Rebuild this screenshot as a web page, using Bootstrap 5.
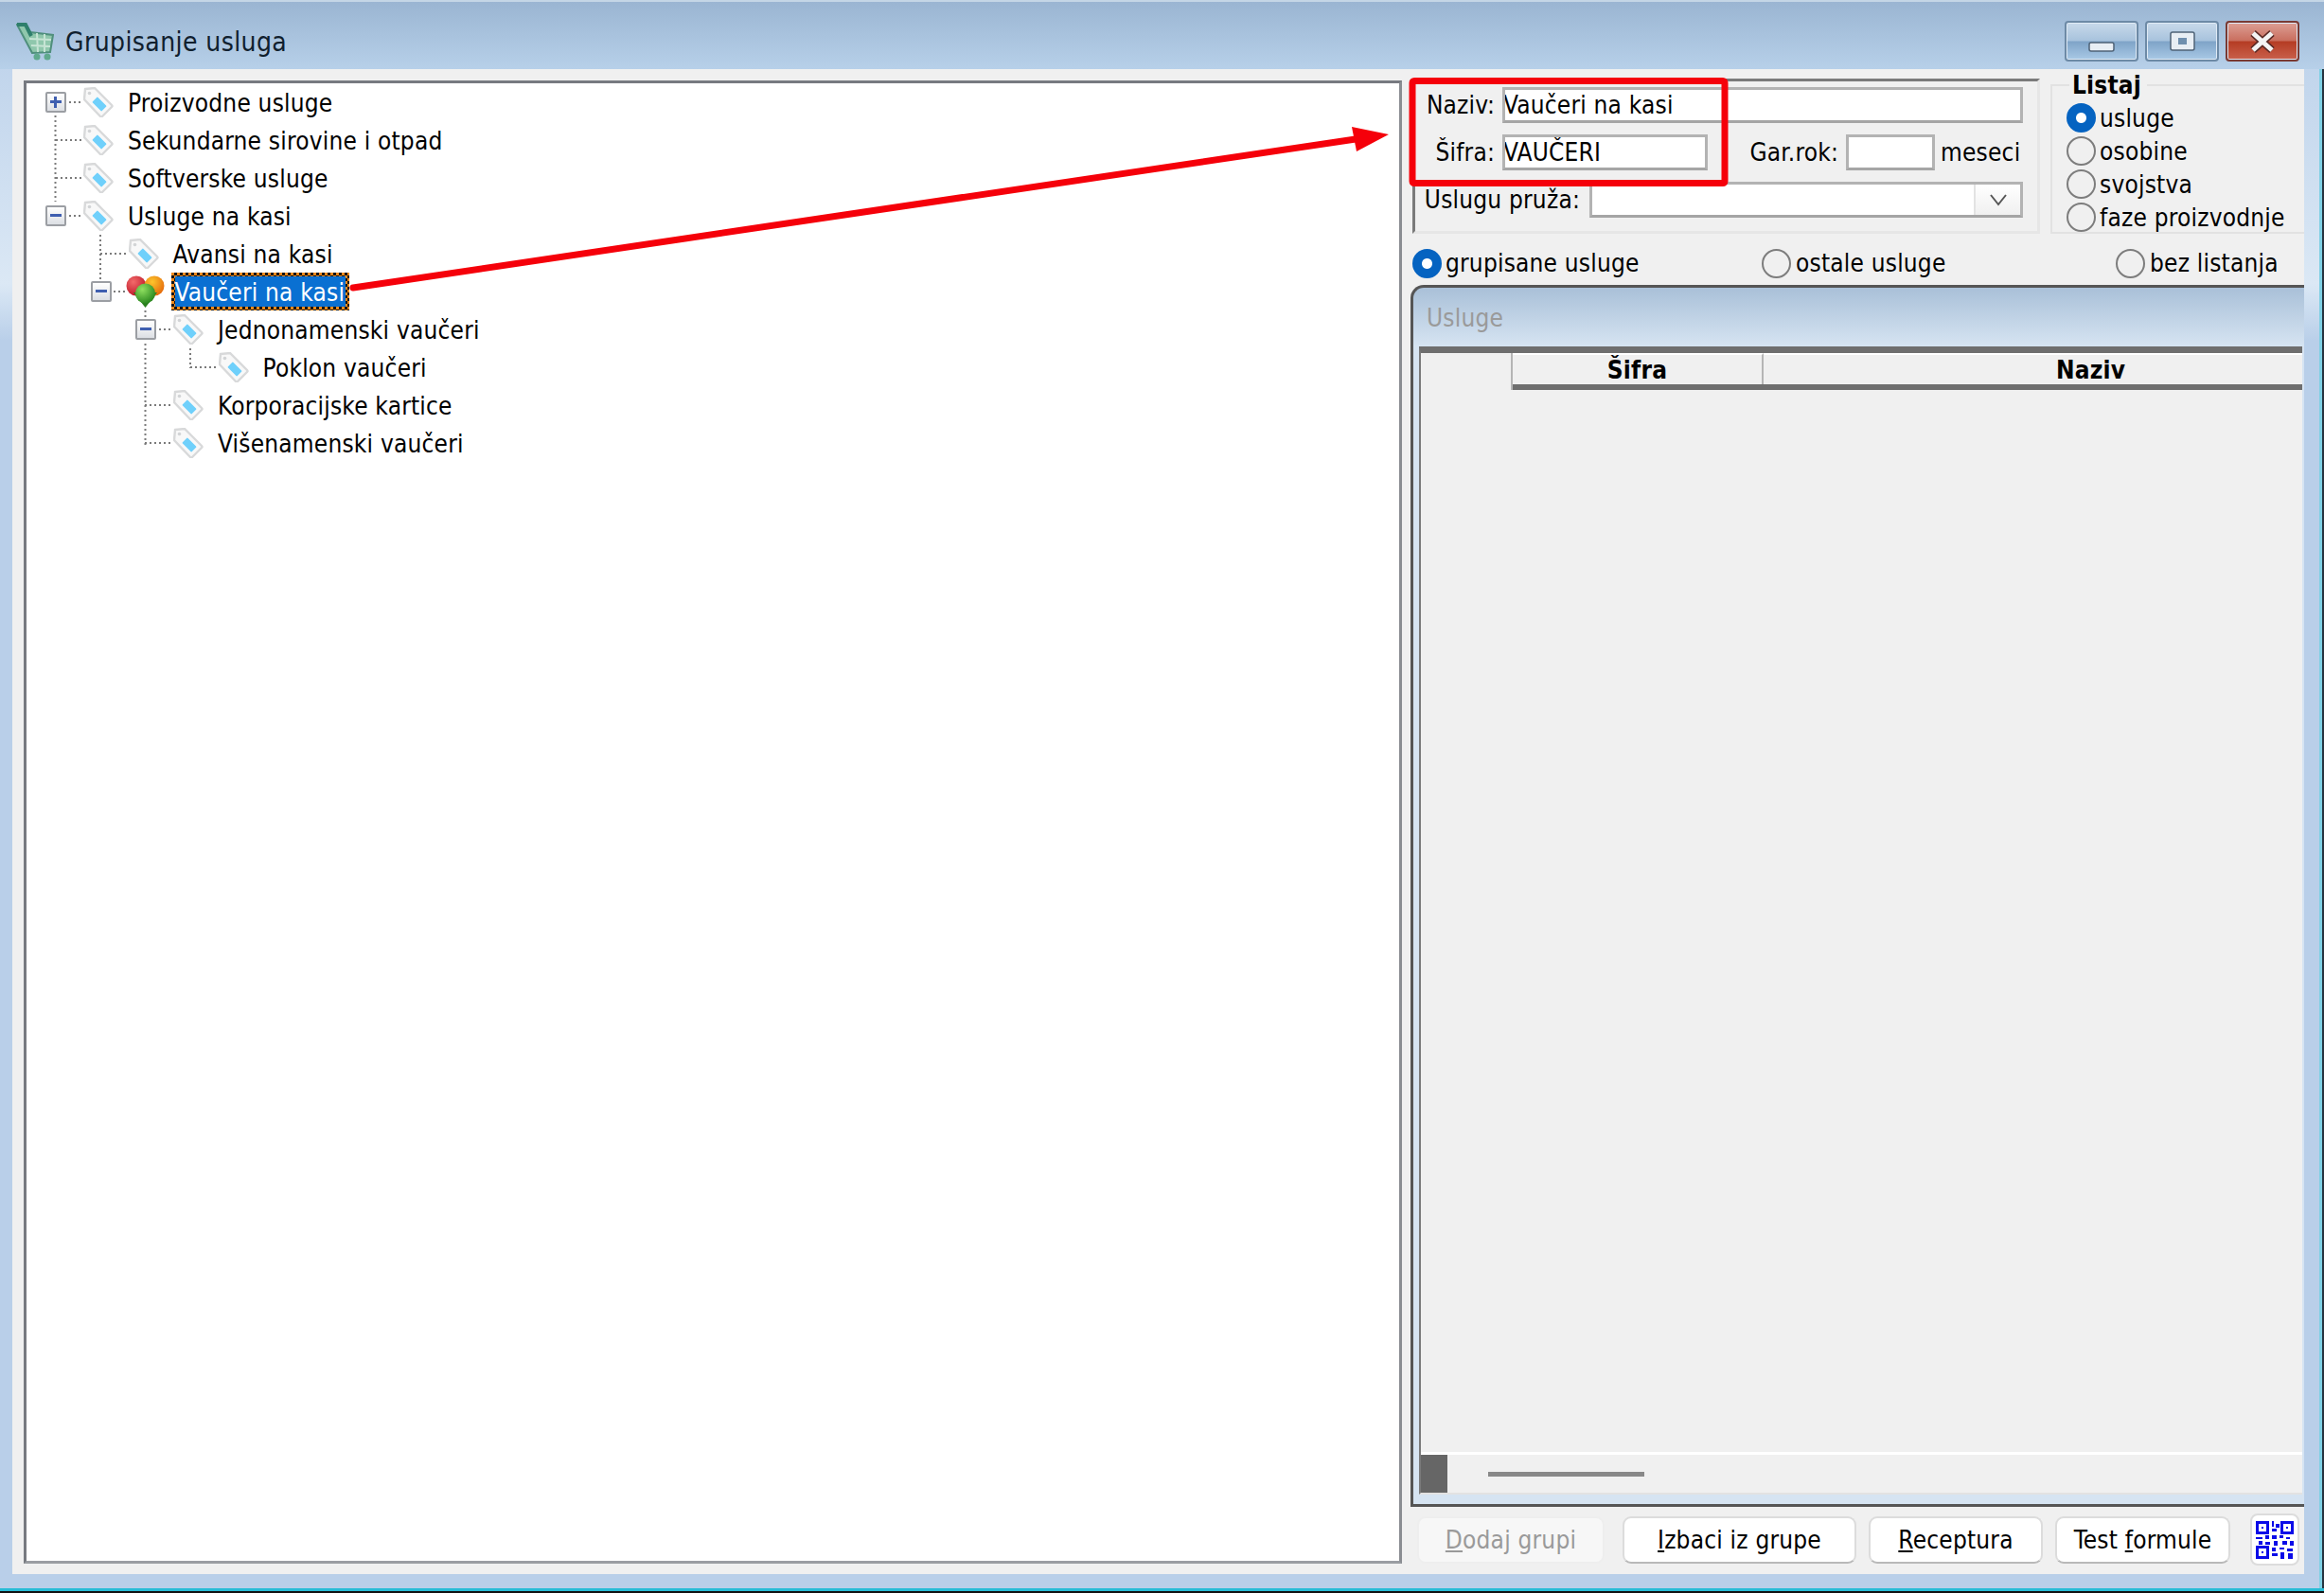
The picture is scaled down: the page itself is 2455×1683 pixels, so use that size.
<!DOCTYPE html>
<html lang="sr">
<head>
<meta charset="utf-8">
<title>Grupisanje usluga</title>
<link href="https://cdn.jsdelivr.net/npm/bootstrap@5.3.0/dist/css/bootstrap.min.css" rel="stylesheet">
<style>
html,body{height:100%;margin:0;overflow:hidden;}
body{font-family:"DejaVu Sans","Liberation Sans",sans-serif;font-stretch:condensed;font-size:26px;letter-spacing:.2px;color:#000;background:#b9cfe9;}
.app{position:relative;width:2455px;height:1683px;background:linear-gradient(180deg,#b9cfe9 0,#dbe8f5 300px,#b9cfe9 360px,#b9cfe9 100%);box-shadow:inset 0 -2px #111,inset 0 -5px #27bcd6,inset -2px 0 #26343f,inset -5px 0 #7fd0e4;}
.ttl{height:73px;padding:12px 26px 0 17px;background:linear-gradient(180deg,#9ab5d2,#b7d0e9);border-top:2px solid #c4d6e6;}
.ttl-text{margin-left:12px;padding-top:3px;font-size:28px;letter-spacing:.4px;color:#10202e;}
.wb{width:78px;height:43px;margin-left:7px;border:2px solid #6d8aa6;border-radius:4px;box-shadow:inset 0 0 0 1px #dfeaf5;background:linear-gradient(180deg,#c8d9ea 0,#a8c3dd 48%,#7fa4c8 52%,#a9c9e6 100%);}
.wb-close{border-color:#7a3a33;background:linear-gradient(180deg,#dd9f95 0,#c96f5f 48%,#b53c24 52%,#c9614c 100%);}
.client{height:1590px;margin:0 21px 0 13px;padding:12px 0 11px 12px;background:#f0f0f0;}
.tree{width:1456px;background:#fff;border:3px solid;border-color:#777a80 #8a8d92 #9a9da2 #777a80;}
.trow{height:40px;padding-left:20px;white-space:nowrap;}
.lv1{margin-left:47.5px;}.lv2{margin-left:95px;}.lv3{margin-left:142.5px;}
.xp{width:22px;height:22px;flex:none;position:relative;border:2px solid #9b9ea3;border-radius:2px;background:linear-gradient(180deg,#fff,#dcdfe4);}
.xp-slot{width:22px;height:22px;flex:none;}
.xp::before{content:"";position:absolute;left:3px;right:3px;top:7px;height:3px;background:#3f5fb0;}
.xp-plus::after{content:"";position:absolute;top:3px;bottom:3px;left:7px;width:3px;background:#3f5fb0;}
.tg{width:32px;height:32px;flex:none;margin-left:18px;}
.tl{margin-left:15px;padding-top:2px;}
.hrt{width:41px;height:34px;flex:none;margin-left:15px;margin-right:0;}
.sel{margin-left:7px;width:188px;height:40px;line-height:34px;padding-left:0;color:#fff;border:4px solid transparent;background:linear-gradient(#0a70d2,#0a70d2) padding-box,repeating-conic-gradient(#151515 0 25%,#f08a1c 0 50%) 0 0/6px 6px border-box;}
.rpane{width:944px;margin-left:9px;}
.det{width:663px;height:164px;margin-left:2px;margin-top:-2px;padding:6px 15px 0 0;border:3px solid;border-color:#7a7a7a #e6e6e6 #e6e6e6 #7a7a7a;}
.lst{width:268px;height:170px;margin:-8px 0 0 11px;padding:4px 0 0 15px;border:2px solid #e2e2e2;border-right:0;min-width:0;}
.lst legend{font-size:26px;font-weight:700;line-height:26px;margin:0 0 0 3px;padding:0 6px 0 3px;}
.frow{height:38px;}
.mt12{margin-top:12px;}
.flb{text-align:right;white-space:nowrap;}
.lb1{width:84px;}
.wbox{height:38px;background:#fff;border:3px solid #b3b3b3;border-bottom-color:#a5a5a5;padding-left:0;line-height:32px;text-indent:-2px;white-space:nowrap;overflow:hidden;}
.combo{width:49px;margin-left:auto;background:linear-gradient(#fff,#f0f0f0);border-left:2px solid #e3e3e3;}
.rad.form-check-input{width:31px;height:31px;margin:0;flex:none;border:2px solid #7d7d7d;background-color:#f0f0f0;}
.rad.form-check-input:checked{background-color:#0563c1;border-color:#0563c1;background-image:radial-gradient(circle,#fff 0 5px,transparent 6px);}
.rrow{height:35px;gap:4px;line-height:1;white-space:nowrap;}
.r3{height:46px;margin-top:8px;flex:none;}
.r3a{flex:none;width:371px;padding-left:2px;gap:4px;}
.r3b{flex:none;width:374px;gap:5px;}
.r3c{flex:none;gap:5px;}
.pnl{height:287px;flex-grow:1;border-top:3px solid #555;border-left:3px solid #555;border-bottom:3px solid #555;border-radius:14px 0 0 0;background:linear-gradient(180deg,#a9c0d8 0,#d6e4f2 62px,#d6e4f2 100%);padding:0;}
.pnl-t{height:62px;padding:10px 0 0 14px;color:#9a9a9a;font-size:26px;line-height:44px;}
.grd{margin:0 2px 10px 6px;border-top:7px solid #6e6e6e;background:#f0f0f0;border-left:2px solid #7a7a7a;border-bottom:2px solid #e2e2e2;}
.ghd{height:39px;border-bottom:6px solid #6e6e6e;font-weight:700;line-height:32px;text-align:center;flex:none;}
.g0{width:97px;background:#f0f0f0;border-right:2px solid #b5b5b5;margin-bottom:-6px;}
.g1{width:265px;border-right:2px solid #b5b5b5;border-top:2px solid #fff;}
.g2{flex:1;border-top:2px solid #fff;padding-left:122px;}
.gft{height:43px;border-top:3px solid #fff;flex:none;}
.gbk{width:28px;background:#666;}
.gbar{width:165px;height:5px;margin:18px 0 0 43px;background:#888;}
.acts{height:50px;margin:10px 0 0 7px;}
.wbtn{height:50px;padding:0;font-family:inherit;font-size:26px;font-stretch:condensed;letter-spacing:.2px;background:#fff;color:#000;border:2px solid #dcdcdc;border-bottom-color:#b9b9b9;border-radius:9px;white-space:nowrap;}
.wbtn:disabled{background:#f7f7f7;color:#9a9a9a;border-color:#eeeeee;opacity:1;}
.b1{width:198px;}.b2{width:247px;margin-left:19px;}.b3{width:184px;margin-left:13px;}.b4{width:185px;margin-left:13px;}
.qrb{width:52px;height:55px;margin:-3px 0 0 21px;padding:0;display:flex;align-items:center;justify-content:center;background:#fff;border:2px solid #dcdcdc;border-radius:8px;}
.ovl{position:absolute;left:0;top:0;pointer-events:none;}
.wsf{width:217px;}.wgr{width:94px;}.wus{width:174px;margin-right:10px;}.wms{width:87px;margin-left:6px;white-space:nowrap;}
</style>
</head>
<body>
<svg width="0" height="0" class="position-absolute">
<defs>
<symbol id="tagi" viewBox="0 0 32 32">
<path d="M2 2 L12 1 L30 19 Q31 20 30 21 L20 31 Q19 32 18 31 L1 13 Z" fill="#f8f8f8" stroke="#d8d9da" stroke-width="2.4"/>
<rect x="13" y="11" width="8" height="14" rx="1" transform="rotate(-45 17 18)" fill="#6fd0fb"/>
<circle cx="6.5" cy="6.5" r="1.8" fill="#d2d4d6"/>
</symbol>
</defs>
</svg>
<div class="app d-flex flex-column">
  <div class="ttl d-flex align-items-center">
    <svg width="40" height="40" viewBox="0 0 40 40" aria-hidden="true">
      <path d="M1 2 L10 2 L15 10 L39 13 L36 31 L17 32 Z" fill="#8fc7ac" stroke="#4f8f7c" stroke-width="2"/>
      <path d="M14 17 L37 18 M16 24 L36 25 M22 11 L23 31 M30 12 L30 31" stroke="#c6e4d4" stroke-width="2" fill="none"/>
      <path d="M1 2 L10 2 L16 14" stroke="#2f7f6c" stroke-width="4" fill="none"/>
      <circle cx="22" cy="36" r="3.5" fill="#5fa98d"/><circle cx="33" cy="36" r="3.5" fill="#5fa98d"/>
    </svg>
    <span class="ttl-text">Grupisanje usluga</span>
    <div class="ms-auto d-flex">
      <div class="wb d-flex align-items-end justify-content-center pb-2"><svg width="28" height="11" viewBox="0 0 28 11"><rect x="1" y="1" width="26" height="9" rx="2" fill="#e8eef4" stroke="#4f6377" stroke-width="1.5"/></svg></div>
      <div class="wb d-flex align-items-center justify-content-center"><svg width="27" height="21" viewBox="0 0 27 21"><rect x="1" y="1" width="25" height="19" rx="2" fill="#e8eef4" stroke="#4f6377" stroke-width="1.5"/><rect x="9" y="7" width="9" height="7" fill="#6f8fae"/></svg></div>
      <div class="wb wb-close d-flex align-items-center justify-content-center"><svg width="28" height="24" viewBox="0 0 28 24"><path d="M4 3 L24 21 M24 3 L4 21" stroke="#5a2a25" stroke-width="8"/><path d="M4 3 L24 21 M24 3 L4 21" stroke="#f4f4f4" stroke-width="5"/></svg></div>
    </div>
  </div>
  <div class="client d-flex">
    <div class="tree">
      <div class="trow d-flex align-items-center"><div class="xp xp-plus"></div><svg class="tg"><use href="#tagi"/></svg><span class="tl">Proizvodne usluge</span></div>
      <div class="trow d-flex align-items-center"><div class="xp-slot"></div><svg class="tg"><use href="#tagi"/></svg><span class="tl">Sekundarne sirovine i otpad</span></div>
      <div class="trow d-flex align-items-center"><div class="xp-slot"></div><svg class="tg"><use href="#tagi"/></svg><span class="tl">Softverske usluge</span></div>
      <div class="trow d-flex align-items-center"><div class="xp"></div><svg class="tg"><use href="#tagi"/></svg><span class="tl">Usluge na kasi</span></div>
      <div class="trow lv1 d-flex align-items-center"><div class="xp-slot"></div><svg class="tg"><use href="#tagi"/></svg><span class="tl">Avansi na kasi</span></div>
      <div class="trow lv1 d-flex align-items-center"><div class="xp"></div>
        <svg class="hrt" viewBox="0 0 41 34" aria-hidden="true">
          <defs>
            <radialGradient id="gr" cx=".35" cy=".3" r=".8"><stop offset="0" stop-color="#f26a6a"/><stop offset="1" stop-color="#b80f22"/></radialGradient>
            <radialGradient id="go" cx=".4" cy=".3" r=".8"><stop offset="0" stop-color="#fcc52c"/><stop offset="1" stop-color="#e25f08"/></radialGradient>
            <radialGradient id="gg" cx=".35" cy=".3" r=".8"><stop offset="0" stop-color="#8fe060"/><stop offset="1" stop-color="#207f18"/></radialGradient>
          </defs>
          <circle cx="11" cy="11" r="10.5" fill="url(#gr)"/><circle cx="30" cy="11" r="10.5" fill="url(#go)"/>
          <path d="M8 18 L20.5 34 L33 18 Z" fill="#2a7f1e"/>
          <circle cx="20.5" cy="19" r="10.5" fill="url(#gg)"/>
        </svg>
        <span class="sel">Vaučeri na kasi</span></div>
      <div class="trow lv2 d-flex align-items-center"><div class="xp"></div><svg class="tg"><use href="#tagi"/></svg><span class="tl">Jednonamenski vaučeri</span></div>
      <div class="trow lv3 d-flex align-items-center"><div class="xp-slot"></div><svg class="tg"><use href="#tagi"/></svg><span class="tl">Poklon vaučeri</span></div>
      <div class="trow lv2 d-flex align-items-center"><div class="xp-slot"></div><svg class="tg"><use href="#tagi"/></svg><span class="tl">Korporacijske kartice</span></div>
      <div class="trow lv2 d-flex align-items-center"><div class="xp-slot"></div><svg class="tg"><use href="#tagi"/></svg><span class="tl">Višenamenski vaučeri</span></div>
    </div>
    <div class="rpane d-flex flex-column">
      <div class="d-flex">
        <div class="det">
          <div class="frow d-flex align-items-center"><div class="flb lb1">Naziv:</div><div class="wbox flex-grow-1 ms-2">Vaučeri na kasi</div></div>
          <div class="frow mt12 d-flex align-items-center">
            <div class="flb lb1">Šifra:</div><div class="wbox ms-2 wsf">VAUČERI</div>
            <div class="flb ms-auto">Gar.rok:</div><div class="wbox wgr ms-2"></div><div class="wms">meseci</div>
          </div>
          <div class="frow mt12 d-flex align-items-center">
            <div class="flb wus">Uslugu pruža:</div>
            <div class="wbox flex-grow-1 d-flex">
              <div class="combo d-flex align-items-center justify-content-center"><svg width="22" height="14" viewBox="0 0 22 14"><path d="M3 2 L11 12 L19 2" fill="none" stroke="#555" stroke-width="2"/></svg></div>
            </div>
          </div>
        </div>
        <fieldset class="lst">
          <legend class="float-none w-auto">Listaj</legend>
          <div class="rrow d-flex align-items-center"><input class="form-check-input rad" type="radio" name="ls" checked aria-label="usluge"><span>usluge</span></div>
          <div class="rrow d-flex align-items-center"><input class="form-check-input rad" type="radio" name="ls" aria-label="osobine"><span>osobine</span></div>
          <div class="rrow d-flex align-items-center"><input class="form-check-input rad" type="radio" name="ls" aria-label="svojstva"><span>svojstva</span></div>
          <div class="rrow d-flex align-items-center"><input class="form-check-input rad" type="radio" name="ls" aria-label="faze proizvodnje"><span>faze proizvodnje</span></div>
        </fieldset>
      </div>
      <div class="r3 d-flex align-items-center">
        <div class="r3a d-flex align-items-center"><input class="form-check-input rad" type="radio" name="gr" checked aria-label="grupisane usluge"><span>grupisane usluge</span></div>
        <div class="r3b d-flex align-items-center"><input class="form-check-input rad" type="radio" name="gr" aria-label="ostale usluge"><span>ostale usluge</span></div>
        <div class="r3c d-flex align-items-center"><input class="form-check-input rad" type="radio" name="gr" aria-label="bez listanja"><span>bez listanja</span></div>
      </div>
      <div class="pnl d-flex flex-column">
        <div class="pnl-t">Usluge</div>
        <div class="grd flex-grow-1 d-flex flex-column">
          <div class="ghd d-flex"><div class="g0"></div><div class="g1">Šifra</div><div class="g2">Naziv</div></div>
          <div class="flex-grow-1"></div>
          <div class="gft d-flex"><div class="gbk"></div><div class="gbar"></div></div>
        </div>
      </div>
      <div class="acts d-flex">
        <button class="btn wbtn b1" disabled><u>D</u>odaj grupi</button>
        <button class="btn wbtn b2"><u>I</u>zbaci iz grupe</button>
        <button class="btn wbtn b3"><u>R</u>eceptura</button>
        <button class="btn wbtn b4">Test <u>f</u>ormule</button>
        <button class="btn qrb" aria-label="QR">
          <svg width="40" height="44" viewBox="0 0 29 29" shape-rendering="crispEdges" aria-hidden="true">
            <g fill="none" stroke="#0b0be8" stroke-width="2"><rect x="1" y="1" width="8" height="8"/><rect x="20" y="1" width="8" height="8"/><rect x="1" y="20" width="8" height="8"/></g>
            <g fill="#0b0be8"><rect x="4" y="4" width="2" height="2"/><rect x="23" y="4" width="2" height="2"/><rect x="4" y="23" width="2" height="2"/>
            <rect x="12" y="0" width="2" height="4"/><rect x="15" y="2" width="3" height="3"/><rect x="12" y="6" width="4" height="2"/><rect x="0" y="12" width="5" height="2"/><rect x="7" y="11" width="3" height="3"/><rect x="12" y="11" width="4" height="3"/><rect x="18" y="11" width="3" height="2"/><rect x="23" y="12" width="3" height="2"/><rect x="2" y="15" width="3" height="3"/><rect x="7" y="16" width="4" height="2"/><rect x="14" y="15" width="3" height="4"/><rect x="20" y="15" width="4" height="3"/><rect x="26" y="15" width="3" height="4"/><rect x="12" y="20" width="3" height="3"/><rect x="18" y="20" width="4" height="2"/><rect x="24" y="21" width="4" height="2"/><rect x="12" y="25" width="5" height="2"/><rect x="19" y="24" width="3" height="5"/><rect x="25" y="25" width="3" height="4"/></g>
          </svg>
        </button>
      </div>
    </div>
  </div>
  <svg class="ovl" width="2455" height="1683" viewBox="0 0 2455 1683" aria-hidden="true">
    <g stroke="#7b7b7b" stroke-width="2" stroke-dasharray="2 3" fill="none">
      <path d="M58.5 122V213M73 108H86M59 148H86M59 188H86M73 228H86"/>
      <path d="M106 248V297M106 268H133M120 308H133"/>
      <path d="M153.5 328V338M153.5 363V470M168 348H181M153 428H181M153 468H181"/>
      <path d="M201 368V389M201 388H228"/>
    </g>
    <rect x="1492" y="85.5" width="330" height="108" rx="2" fill="none" stroke="#f5000a" stroke-width="7"/>
    <path d="M373 304L1432 147" stroke="#f5000a" stroke-width="7" stroke-linecap="round"/>
    <path d="M1467 142L1428 134L1433 160Z" fill="#f5000a"/>
  </svg>
</div>
</body>
</html>
